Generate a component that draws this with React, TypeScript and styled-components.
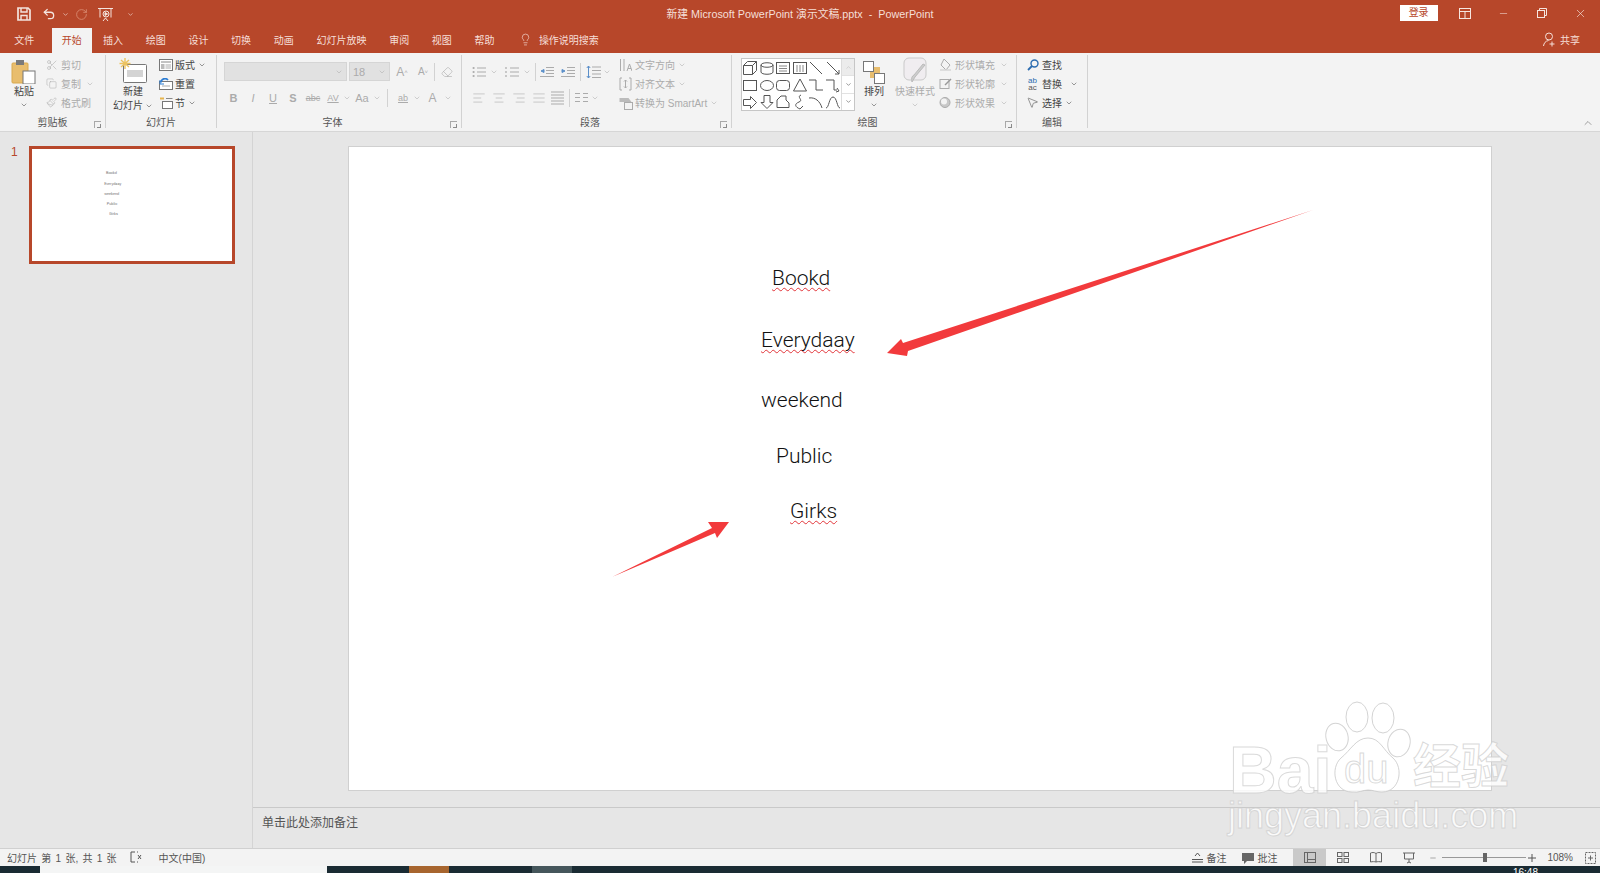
import React from "react";
import styled, { createGlobalStyle } from "styled-components";
import {
  AlignCenter,
  AlignJustify,
  AlignLeft,
  AlignRight,
  ChevronDown,
  ChevronUp,
  Copy,
  Eraser,
  Lightbulb,
  Minus,
  MousePointer2,
  Paintbrush,
  Scissors,
  Undo2,
  RotateCw,
  X,
} from "lucide-react";

const BRAND = "#b7472a";
const MUTED = "#ababab";
const INK = "#444";

const GlobalStyle = createGlobalStyle`
  html, body { margin: 0; padding: 0; height: 100%; overflow: hidden; }
  body { font-family: "Liberation Sans", "Noto Sans CJK SC", sans-serif; font-size: 10px; color: ${INK}; }
`;

const Page = styled.div`
  position: relative;
  display: flex;
  flex-direction: column;
  width: 1600px;
  height: 873px;
  overflow: hidden;
  background: #e6e6e6;
`;

const TitleBar = styled.div`
  display: grid;
  grid-template-columns: 1fr auto 1fr;
  align-items: center;
  height: 28px;
  background: ${BRAND};
  color: #f6e6e0;
`;

const Qat = styled.div`
  display: flex;
  align-items: center;
  padding-left: 17px;
  color: #f4e4de;
`;

const QatSlot = styled.span<{ $w: number; $dim?: boolean }>`
  display: flex;
  align-items: center;
  width: ${(p) => p.$w}px;
  color: ${(p) => (p.$dim ? "#d98b72" : "inherit")};
`;

const DocTitle = styled.div`
  padding-bottom: 3px;
  font-size: 10.8px;
  white-space: pre;
  color: #f5dfd8;
`;

const WindowBtns = styled.div`
  display: flex;
  align-items: center;
  justify-content: flex-end;
  padding-bottom: 2px;
`;

const SignIn = styled.div`
  width: 38px;
  height: 16px;
  line-height: 16px;
  margin-right: 8px;
  text-align: center;
  background: #fff;
  color: ${BRAND};
`;

const WinBtn = styled.div`
  display: flex;
  align-items: center;
  justify-content: center;
  width: 38.6px;
  height: 26px;
  color: #f6e6e0;
`;

const TabBar = styled.div`
  display: flex;
  align-items: stretch;
  height: 25px;
  padding-left: 3px;
  background: ${BRAND};
  color: #f6dfd8;
`;

const Tab = styled.div<{ $active?: boolean; $file?: boolean }>`
  display: flex;
  align-items: center;
  padding: 0 ${(p) => (p.$active ? 10 : 11.35)}px 3px;
  margin-right: ${(p) => (p.$file ? 6 : 0)}px;
  background: ${(p) => (p.$active ? "#f3f3f3" : "transparent")};
  color: ${(p) => (p.$active ? BRAND : "inherit")};
`;

const TellMe = styled.div`
  display: flex;
  align-items: center;
  gap: 7px;
  margin-left: 13px;
  padding-bottom: 3px;
`;

const Share = styled.div`
  display: flex;
  align-items: center;
  gap: 3px;
  margin-left: auto;
  padding: 0 20px 3px 0;
`;

const Ribbon = styled.div`
  position: relative;
  display: flex;
  height: 78px;
  background: #f3f3f3;
  border-bottom: 1px solid #d6d6d6;
`;

const Group = styled.div<{ $w: number }>`
  display: flex;
  flex-direction: column;
  width: ${(p) => p.$w}px;
  margin: 2px 0 3px;
  border-right: 1px solid #d2d2d2;
  box-sizing: border-box;
  position: relative;
`;

const GroupBody = styled.div<{ $col?: boolean; $pad?: number }>`
  flex: 1;
  display: flex;
  flex-direction: ${(p) => (p.$col ? "column" : "row")};
  padding-left: ${(p) => p.$pad ?? 0}px;
  min-height: 0;
`;

const GroupLabel = styled.div<{ $launcher?: boolean }>`
  height: 13px;
  line-height: 16px;
  text-align: center;
  padding-right: ${(p) => (p.$launcher ? 13 : 0)}px;
  color: #555;
`;

const Launcher = styled.span`
  position: absolute;
  right: 4px;
  bottom: 0;
  width: 6px;
  height: 6px;
  border: 1px solid #a8a8a8;
  border-width: 1px 0 0 1px;
  &::after {
    content: "";
    position: absolute;
    right: 0;
    bottom: 0;
    width: 3px;
    height: 3px;
    border: 1px solid #8a8a8a;
    border-width: 0 1px 1px 0;
  }
`;

const LargeBtn = styled.div<{ $w: number; $off?: boolean }>`
  display: flex;
  flex-direction: column;
  align-items: center;
  flex: none;
  width: ${(p) => p.$w}px;
  line-height: 14px;
  white-space: nowrap;
  color: ${(p) => (p.$off ? MUTED : INK)};
`;

const LargeIcon = styled.div`
  display: flex;
  flex: none;
  align-items: flex-end;
  justify-content: center;
  height: 29px;
  margin-bottom: 1px;
`;

const RowStack = styled.div<{ $w?: number; $left?: number }>`
  display: flex;
  flex-direction: column;
  width: ${(p) => (p.$w ? `${p.$w}px` : "auto")};
  margin-left: ${(p) => p.$left ?? 0}px;
`;

const SmallRow = styled.div<{ $off?: boolean }>`
  display: flex;
  align-items: center;
  height: 19px;
  color: ${(p) => (p.$off ? MUTED : INK)};
  white-space: nowrap;
`;

const RowIcon = styled.span<{ $w?: number }>`
  display: flex;
  align-items: center;
  justify-content: center;
  width: ${(p) => p.$w ?? 15}px;
  margin-right: 2px;
`;

const Chev = styled(ChevronDown).attrs({ size: 8, strokeWidth: 1.6 })<{ $left?: number }>`
  margin-left: ${(p) => p.$left ?? 3}px;
  flex: none;
`;

const LargeChev = styled(ChevronDown).attrs({ size: 8, strokeWidth: 1.6 })`
  margin-top: 2px;
  flex: none;
`;

const InlineLabel = styled.span`
  display: inline-flex;
  align-items: center;
  gap: 2px;
`;

const ReplaceGlyph = styled.span`
  display: flex;
  flex-direction: column;
  align-items: center;
  font-family: "Liberation Sans", sans-serif;
  font-size: 8px;
  line-height: 7px;
  color: #2b6cb0;
`;

const ReplaceLow = styled.span`
  color: #555;
`;

const ControlRow = styled.div<{ $top: number }>`
  display: flex;
  align-items: center;
  height: 19px;
  margin-top: ${(p) => p.$top}px;
  color: ${MUTED};
`;

const Combo = styled.div<{ $w: number; $left?: number }>`
  display: flex;
  align-items: center;
  justify-content: flex-end;
  width: ${(p) => p.$w}px;
  height: 19px;
  box-sizing: border-box;
  margin-left: ${(p) => p.$left ?? 0}px;
  padding: 0 3px;
  background: #e1e1e1;
  border: 1px solid #d5d5d5;
  font-size: 11px;
  color: ${MUTED};
`;

const SizeText = styled.span`
  flex: 1;
`;

const Glyph = styled.span<{ $x: number; $size?: number; $weight?: number; $italic?: boolean; $under?: boolean; $strike?: boolean }>`
  display: inline-flex;
  align-items: center;
  justify-content: center;
  position: relative;
  width: ${(p) => p.$x}px;
  font-family: "Liberation Sans", sans-serif;
  font-size: ${(p) => p.$size ?? 11}px;
  font-weight: ${(p) => p.$weight ?? 400};
  font-style: ${(p) => (p.$italic ? "italic" : "normal")};
  text-decoration: ${(p) => (p.$under ? "underline" : p.$strike ? "line-through" : "none")};
`;

const Sup = styled.sup`
  font-size: 6px;
`;

const Sep = styled.span<{ $mx?: number }>`
  width: 1px;
  height: 18px;
  margin: 0 ${(p) => p.$mx ?? 5}px;
  background: #d2d2d2;
  flex: none;
`;

const Gallery = styled.div`
  display: flex;
  flex: none;
  width: 114px;
  height: 53px;
  margin: 3px 0 0 9px;
  box-sizing: border-box;
  background: #fff;
  border: 1px solid #c6c6c6;
`;

const ShapeGrid = styled.div`
  flex: 1;
  display: grid;
  grid-template-columns: repeat(6, 1fr);
  grid-auto-rows: 17px;
  align-items: center;
  justify-items: center;
  color: #555;
`;

const GalleryScroll = styled.div`
  display: flex;
  flex-direction: column;
  width: 12px;
  border-left: 1px solid #dcdcdc;
`;

const ScrollCell = styled.div<{ $off?: boolean }>`
  flex: 1;
  display: flex;
  align-items: center;
  justify-content: center;
  color: ${(p) => (p.$off ? "#c0c0c0" : "#555")};
  background: ${(p) => (p.$off ? "#ececec" : "transparent")};
  & + & {
    border-top: 1px solid #e2e2e2;
  }
`;

const Collapse = styled.span`
  position: absolute;
  right: 6px;
  bottom: 0;
  color: #666;
`;

const Workspace = styled.div`
  flex: 1;
  display: flex;
  min-height: 0;
`;

const ThumbPanel = styled.div`
  display: flex;
  align-items: flex-start;
  width: 253px;
  padding-top: 14px;
  box-sizing: border-box;
  border-right: 1px solid #d4d4d4;
`;

const ThumbNumber = styled.div`
  width: 29px;
  padding-left: 11px;
  box-sizing: border-box;
  font-size: 12px;
  line-height: 12px;
  color: ${BRAND};
`;

const Thumb = styled.div`
  position: relative;
  width: 206px;
  height: 118px;
  box-sizing: border-box;
  background: #fff;
  border: 3px solid ${BRAND};
`;

const ThumbWord = styled.span`
  position: absolute;
  font-family: Roboto, sans-serif;
  font-size: 3.8px;
  color: #777;
  transform: translateY(-50%);
`;

const Editor = styled.div`
  flex: 1;
  display: flex;
  flex-direction: column;
  min-width: 0;
`;

const Canvas = styled.div`
  flex: 1;
  padding: 14px 0 0 95px;
`;

const Slide = styled.div`
  position: relative;
  width: 1144px;
  height: 645px;
  box-sizing: border-box;
  background: #fff;
  border: 1px solid #d0d0d0;
`;

const Word = styled.span<{ $wavy?: boolean }>`
  position: absolute;
  font-family: Roboto, sans-serif;
  font-size: 21px;
  font-weight: 300;
  line-height: 26px;
  color: #111;
  transform: translateY(-50%);
  white-space: nowrap;
  text-decoration: ${(p) => (p.$wavy ? "underline wavy #e2353a 1px" : "none")};
  text-decoration-skip-ink: none;
  text-underline-offset: 2px;
`;

const ArrowLayer = styled.svg`
  position: absolute;
  inset: 0;
  width: 100%;
  height: 100%;
`;

const Notes = styled.div`
  display: flex;
  align-items: center;
  height: 41px;
  padding: 0 0 13px 9px;
  box-sizing: border-box;
  border-top: 1px solid #c9c9c9;
  font-size: 12px;
  color: #555;
`;

const StatusBar = styled.div`
  display: flex;
  align-items: center;
  height: 18px;
  box-sizing: border-box;
  padding-left: 7px;
  background: #f3f3f3;
  border-top: 1px solid #d0d0d0;
  color: #555;
`;

const StatusText = styled.span<{ $left?: number; $spread?: boolean }>`
  display: inline-flex;
  margin-left: ${(p) => p.$left ?? 0}px;
  white-space: pre;
  word-spacing: ${(p) => (p.$spread ? 1.5 : 0)}px;
`;

const StatusRight = styled.div`
  display: flex;
  align-items: center;
  height: 100%;
  margin-left: auto;
`;

const StatusItem = styled.div<{ $right?: number }>`
  display: flex;
  align-items: center;
  gap: 3px;
  margin-right: ${(p) => p.$right ?? 0}px;
`;

const ViewBtn = styled.div<{ $active?: boolean; $w?: number; $left?: number }>`
  display: flex;
  align-items: center;
  justify-content: center;
  width: ${(p) => p.$w ?? 33}px;
  height: 100%;
  margin-left: ${(p) => p.$left ?? 0}px;
  background: ${(p) => (p.$active ? "#c9c9c9" : "transparent")};
  color: #666;
`;

const ZoomMinus = styled.span`
  display: flex;
  margin-left: 4px;
`;

const SliderTrack = styled.div`
  position: relative;
  width: 84px;
  height: 1px;
  margin: 0 2px 0 5px;
  background: #999;
`;

const SliderThumb = styled.span`
  position: absolute;
  left: 41px;
  top: -4px;
  width: 4px;
  height: 9px;
  background: #666;
`;

const Taskbar = styled.div`
  position: relative;
  display: flex;
  height: 7px;
  background: #1a2b33;
  overflow: hidden;
`;

const TaskSlot = styled.span<{ $w: number; $left: number; $bg: string }>`
  width: ${(p) => p.$w}px;
  margin-left: ${(p) => p.$left}px;
  background: ${(p) => p.$bg};
`;

const Clock = styled.span`
  position: absolute;
  right: 62px;
  top: 1px;
  font-size: 10px;
  line-height: 12px;
  color: #fff;
`;

const Watermark = styled.div`
  position: absolute;
  left: 1226px;
  top: 700px;
  width: 300px;
  height: 140px;
  pointer-events: none;
`;

const WmText = styled.span<{ $x: number; $y: number; $size: number; $weight?: number; $tight?: boolean }>`
  position: absolute;
  left: ${(p) => p.$x}px;
  top: ${(p) => p.$y}px;
  font-family: "Liberation Sans", "Noto Sans CJK SC", sans-serif;
  font-size: ${(p) => p.$size}px;
  font-weight: ${(p) => p.$weight ?? 700};
  line-height: ${(p) => (p.$tight ? 0.8 : 1)};
  white-space: nowrap;
  color: rgba(255, 255, 255, 0.82);
  -webkit-text-stroke: 1px rgba(205, 205, 205, 0.75);
`;

const WmPaw = styled.svg`
  position: absolute;
  left: 94px;
  top: 0;
  width: 96px;
  height: 96px;
`;

const Svg = ({ w = 14, h = 14, children }: { w?: number; h?: number; children: React.ReactNode }) => (
  <svg width={w} height={h} viewBox={`0 0 ${w} ${h}`} fill="none" stroke="currentColor" strokeWidth={1}>
    {children}
  </svg>
);

const SaveIcon = () => (
  <Svg w={14} h={14}>
    <path d="M1 1h10l2 2v10H1z" strokeWidth="1.7" />
    <path d="M4 1v4h6V1M4 13V8.5h6V13" strokeWidth="1.4" />
  </Svg>
);

const ShareIcon = () => (
  <Svg w={14} h={15}>
    <circle cx="6" cy="4.5" r="3.5" />
    <path d="M0.5 14c.5-3 2-5 5-5.5M9 9.500v5M6.500 12h5" />
  </Svg>
);

const FindIcon = () => (
  <Svg w={12} h={12}>
    <circle cx="7.5" cy="4.5" r="3.5" stroke="#2b6cb0" strokeWidth="1.4" />
    <path d="M5 7l-4 4" stroke="#2b6cb0" strokeWidth="1.8" />
  </Svg>
);

const PasteIcon = () => (
  <Svg w={26} h={26}>
    <rect x="1" y="5" width="16" height="20" rx="1" fill="#e8bd6d" stroke="#d9a94f" />
    <rect x="5" y="2" width="8" height="5" fill="#7a7a7a" stroke="none" />
    <rect x="12" y="13" width="12" height="13" fill="#fff" stroke="#777" />
  </Svg>
);

const NewSlideIcon = () => (
  <Svg w={28} h={26}>
    <rect x="4.5" y="6.5" width="23" height="18" rx="1" fill="#fff" stroke="#777" />
    <rect x="8" y="12" width="16" height="7" fill="#d4d4d4" stroke="none" />
    <path d="M6 0v11M0.5 5.5h11M2 2l8 7M10 2l-8 7" stroke="#ecc35f" strokeWidth="1.4" />
  </Svg>
);

const LayoutIcon = () => (
  <Svg w={14} h={12}>
    <rect x="0.5" y="0.5" width="13" height="11" fill="#fff" stroke="#777" />
    <path d="M2 3h10" stroke="#888" />
    <rect x="2" y="5" width="3.5" height="5" fill="#bbb" stroke="none" />
    <rect x="6.5" y="5" width="5.5" height="5" fill="#d6d6d6" stroke="none" />
  </Svg>
);

const ResetIcon = () => (
  <Svg w={14} h={12}>
    <rect x="0.5" y="3.5" width="13" height="8" fill="#fff" stroke="#777" />
    <path d="M2 4.5a4 4 0 0 1 7-2.500" stroke="#2b7cd3" strokeWidth="1.6" />
    <path d="M1 2v4h4" stroke="#2b7cd3" />
    <path d="M3 8h8" stroke="#aaa" />
  </Svg>
);

const SectionIcon = () => (
  <Svg w={14} h={13}>
    <path d="M1 2.5h4" stroke="#e6b44c" strokeWidth="2" />
    <path d="M7 2.5h6.5" stroke="#888" />
    <rect x="3.5" y="5.5" width="10" height="7" fill="#fff" stroke="#777" />
  </Svg>
);

const ArrangeIcon = () => (
  <Svg w={22} h={23}>
    <rect x="7" y="6" width="10" height="11" fill="#e8bd6d" stroke="none" />
    <rect x="0.5" y="0.5" width="10" height="10" fill="#fff" stroke="#777" />
    <rect x="11.5" y="12.5" width="10" height="10" fill="#fff" stroke="#777" />
  </Svg>
);

const QuickStyleIcon = () => (
  <Svg w={25} h={27}>
    <rect x="1" y="1" width="22" height="22" rx="5" fill="#f0edf0" stroke="#c9c9c9" />
    <path d="M22 8L12 20l-3 5c-1-4 0-6 2-7l9-11z" fill="#cdcdcd" stroke="#bbb" />
  </Svg>
);

const ShapeFillIcon = () => (
  <Svg w={13} h={13}>
    <path d="M5 1l6 6-4 5-5-5z" stroke={MUTED} />
    <path d="M1 12h11" stroke="#d6d6d6" strokeWidth="1.5" />
  </Svg>
);

const ShapeLineIcon = () => (
  <Svg w={13} h={13}>
    <rect x="1" y="2.5" width="9" height="9" stroke={MUTED} />
    <path d="M6 8l6-6" stroke="#999" strokeWidth="1.4" />
  </Svg>
);

const ShapeFxIcon = () => (
  <Svg w={13} h={13}>
    <circle cx="6" cy="6.5" r="5" fill="#c8c8c8" stroke="#aaa" />
    <circle cx="5" cy="5.5" r="3" fill="#f3f3f3" stroke="none" />
  </Svg>
);

const ListIcon = ({ numbered }: { numbered?: boolean }) => (
  <Svg w={14} h={12}>
    {[2, 6, 10].map((y) => (
      <g key={y}>
        <path d={`M5 ${y}h9`} />
        {numbered ? <path d={`M1 ${y - 1}v2`} strokeWidth="1.2" /> : <circle cx="1.6" cy={y} r="1.1" fill="currentColor" stroke="none" />}
      </g>
    ))}
  </Svg>
);

const IndentIcon = ({ more }: { more?: boolean }) => (
  <Svg w={14} h={12}>
    <path d="M6 1.5h8M6 4.5h8M6 7.5h8M0 10.5h14" />
    <path d={more ? "M1 3.5l3 1.5-3 1.5z" : "M4 3.5L1 5l3 1.5z"} fill="#5b8fc9" stroke="#5b8fc9" />
  </Svg>
);

const LineSpacingIcon = () => (
  <Svg w={15} h={14}>
    <path d="M6 2h9M6 5.5h9M6 9h9M6 12.5h9" />
    <path d="M2.5 1v12M0.8 3L2.5 1l1.7 2M0.8 11l1.7 2 1.7-2" stroke="#5b8fc9" />
  </Svg>
);

const TextDirIcon = () => (
  <Svg w={13} h={14}>
    <path d="M1.5 1v12M5 1v12M8 13l2.5-7 2.5 7M9 10.5h3" />
  </Svg>
);

const AlignTextIcon = () => (
  <Svg w={13} h={14}>
    <path d="M3 1H1v12h2M10 1h2v12h-2M6.5 3v8M5 4.5L6.5 3 8 4.5M5 9.5L6.5 11 8 9.5" />
  </Svg>
);

const SmartArtIcon = () => (
  <Svg w={14} h={14}>
    <path d="M0.5 2h9l3 4h-12z" fill="#bbb" stroke="none" />
    <rect x="5.5" y="6.5" width="8" height="7" fill="#f3f3f3" stroke={MUTED} />
  </Svg>
);

const DistributeIcon = () => (
  <Svg w={13} h={14}>
    <path d="M0 1h13M0 13h13M0 4h13M0 7h13M0 10h13" strokeWidth="1.2" />
  </Svg>
);

const ColumnsIcon = () => (
  <Svg w={13} h={11}>
    <path d="M0 1.5h5M0 5.5h5M0 9.5h5M8 1.5h5M8 5.5h5M8 9.5h5" />
  </Svg>
);

const ShapeIcons = [
  <path key="cube" d="M1.5 5.5h9v9h-9zM1.5 5.5l4-4h9v9l-4 4M10.5 5.5l4-4" />,
  <path key="can" d="M2 5v7c0 3 12 3 12 0V5c0-3-12-3-12 0c0 3 12 3 12 0" />,
  <g key="textbox"><rect x="1.5" y="2.5" width="13" height="11" /><path d="M4 6h8M4 8.5h8M4 11h8" stroke="#888" /></g>,
  <g key="vtext"><rect x="1.5" y="2.5" width="13" height="11" /><path d="M5 5v7M8 5v7M11 5v7" stroke="#888" /></g>,
  <path key="line" d="M2 2l12 12" />,
  <path key="arrowline" d="M2 2l12 12M14 10v4h-4" />,
  <rect key="rect" x="1.5" y="3.5" width="13" height="10" />,
  <ellipse key="ellipse" cx="8" cy="8.5" rx="6.5" ry="5" />,
  <rect key="round" x="1.5" y="3.5" width="13" height="10" rx="3" />,
  <path key="tri" d="M8 2l6.5 12h-13z" />,
  <path key="elbow" d="M1 3h7v10h7" />,
  <path key="elbowar" d="M1 3h8v10h3M12 11l2 3-3 1" />,
  <path key="rightar" d="M1.5 5.5h7V2.5l6 6-6 6v-3h-7z" />,
  <path key="downar" d="M5 1.5h6v7h3l-6 6-6-6h3z" />,
  <path key="penta" d="M2 13.5V6l4-4h5v4l3 3v4.5z" />,
  <path key="squig" d="M9 1C4 3 12 6 7 8S3 13 8 15M11 12l-3 3" />,
  <path key="arc" d="M1 4c6-1 11 3 13 10" />,
  <path key="curve" d="M1 14C4 14 4 3 8 3s4 11 7 11" />,
];

const Arrows = () => (
  <ArrowLayer viewBox="0 0 1142 643">
    <polygon fill="#f23a3c" points="964,63 554,196 552,192 538,206 558,209 559,204" />
    <polygon fill="#f23a3c" points="263,430 363,381 359,375 380,375 368,391 366,386" />
  </ArrowLayer>
);

const WORDS: { text: string; x: number; y: number; wavy?: boolean }[] = [
  { text: "Bookd", x: 423, y: 131, wavy: true },
  { text: "Everydaay", x: 412, y: 193, wavy: true },
  { text: "weekend", x: 412, y: 253 },
  { text: "Public", x: 427, y: 309 },
  { text: "Girks", x: 441, y: 364, wavy: true },
];

const TABS = ["插入", "绘图", "设计", "切换", "动画", "幻灯片放映", "审阅", "视图", "帮助"];
const SCALE = 200 / 1142;

export default function App() {
  return (
    <Page>
      <GlobalStyle />
      <TitleBar>
        <Qat>
          <QatSlot $w={25}><SaveIcon /></QatSlot>
          <QatSlot $w={20}><Undo2 size={14} strokeWidth={2.2} /></QatSlot>
          <QatSlot $w={13}><ChevronDown size={7} strokeWidth={2} /></QatSlot>
          <QatSlot $w={23} $dim><RotateCw size={13} strokeWidth={1.6} /></QatSlot>
          <QatSlot $w={29}>
            <Svg w={15} h={15}>
              <path d="M0 1.5h15M2 1.5v9M13 1.5v9M5 14l2.5-3 2.5 3" />
              <circle cx="8" cy="7" r="3" />
              <path d="M7 5.5l2.5 1.5L7 8.5z" fill="currentColor" />
            </Svg>
          </QatSlot>
          <QatSlot $w={10}><ChevronDown size={7} strokeWidth={2} /></QatSlot>
        </Qat>
        <DocTitle>新建 Microsoft PowerPoint 演示文稿.pptx  -  PowerPoint</DocTitle>
        <WindowBtns>
          <SignIn>登录</SignIn>
          <WinBtn>
            <Svg w={12} h={11}>
              <rect x="0.5" y="0.5" width="11" height="10" />
              <path d="M0.5 3.5h11M6 3.5v7" />
            </Svg>
          </WinBtn>
          <WinBtn><Minus size={11} strokeWidth={1.2} /></WinBtn>
          <WinBtn>
            <Svg w={10} h={10}>
              <rect x="0.5" y="2.5" width="7" height="7" />
              <path d="M2.5 2.5v-2h7v7h-2" />
            </Svg>
          </WinBtn>
          <WinBtn><X size={13} strokeWidth={1.2} /></WinBtn>
        </WindowBtns>
      </TitleBar>

      <TabBar>
        <Tab $file>文件</Tab>
        <Tab $active>开始</Tab>
        {TABS.map((t) => (
          <Tab key={t}>{t}</Tab>
        ))}
        <TellMe>
          <Lightbulb size={13} strokeWidth={1.2} />
          操作说明搜索
        </TellMe>
        <Share>
          <ShareIcon />
          共享
        </Share>
      </TabBar>

      <Ribbon>
        <Group $w={106}>
          <GroupBody $pad={9}>
            <LargeBtn $w={30}>
              <LargeIcon><PasteIcon /></LargeIcon>
              粘贴
              <LargeChev />
            </LargeBtn>
            <RowStack $left={5}>
              <SmallRow $off><RowIcon><Scissors size={12} strokeWidth={1.1} /></RowIcon>剪切</SmallRow>
              <SmallRow $off><RowIcon><Copy size={11} strokeWidth={1.1} /></RowIcon>复制<Chev $left={5} /></SmallRow>
              <SmallRow $off><RowIcon><Paintbrush size={11} strokeWidth={1.1} /></RowIcon>格式刷</SmallRow>
            </RowStack>
          </GroupBody>
          <GroupLabel>剪贴板</GroupLabel>
          <Launcher />
        </Group>

        <Group $w={111}>
          <GroupBody $pad={6}>
            <LargeBtn $w={42}>
              <LargeIcon><NewSlideIcon /></LargeIcon>
              新建
              <InlineLabel>幻灯片<Chev $left={0} /></InlineLabel>
            </LargeBtn>
            <RowStack $left={4}>
              <SmallRow><RowIcon><LayoutIcon /></RowIcon>版式<Chev /></SmallRow>
              <SmallRow><RowIcon><ResetIcon /></RowIcon>重置</SmallRow>
              <SmallRow><RowIcon><SectionIcon /></RowIcon>节<Chev /></SmallRow>
            </RowStack>
          </GroupBody>
          <GroupLabel>幻灯片</GroupLabel>
        </Group>

        <Group $w={245}>
          <GroupBody $col $pad={7}>
            <ControlRow $top={7}>
              <Combo $w={123}><Chev $left={0} /></Combo>
              <Combo $w={41} $left={2}><SizeText>18</SizeText><Chev $left={0} /></Combo>
              <Glyph $x={24} $size={12}>A<Sup>˄</Sup></Glyph>
              <Glyph $x={18} $size={10}>A<Sup>˅</Sup></Glyph>
              <Sep $mx={2} />
              <Glyph $x={20}><Eraser size={12} strokeWidth={1.2} /></Glyph>
            </ControlRow>
            <ControlRow $top={7}>
              <Glyph $x={19} $weight={700}>B</Glyph>
              <Glyph $x={20} $italic>I</Glyph>
              <Glyph $x={20} $under>U</Glyph>
              <Glyph $x={20} $weight={700}>S</Glyph>
              <Glyph $x={20} $size={9} $strike>abc</Glyph>
              <Glyph $x={20} $size={9} $under>AV</Glyph>
              <Chev $left={0} />
              <Glyph $x={22}>Aa</Glyph>
              <Chev $left={0} />
              <Sep $mx={6} />
              <Glyph $x={18} $size={9} $under>ab</Glyph>
              <Chev $left={1} />
              <Glyph $x={23} $size={12}>A</Glyph>
              <Chev $left={0} />
            </ControlRow>
          </GroupBody>
          <GroupLabel $launcher>字体</GroupLabel>
          <Launcher />
        </Group>

        <Group $w={270}>
          <GroupBody $pad={10}>
            <RowStack $w={146}>
              <ControlRow $top={7}>
                <ListIcon /><Chev $left={4} />
                <Glyph $x={7} />
                <ListIcon numbered /><Chev $left={4} />
                <Sep $mx={4} />
                <IndentIcon /><Glyph $x={7} /><IndentIcon more />
                <Sep $mx={5} />
                <LineSpacingIcon /><Chev $left={2} />
              </ControlRow>
              <ControlRow $top={7}>
                <AlignLeft size={14} strokeWidth={1} />
                <Glyph $x={6} />
                <AlignCenter size={14} strokeWidth={1} />
                <Glyph $x={6} />
                <AlignRight size={14} strokeWidth={1} />
                <Glyph $x={6} />
                <AlignJustify size={14} strokeWidth={1} />
                <Glyph $x={5} />
                <DistributeIcon />
                <Sep $mx={5} />
                <ColumnsIcon /><Chev $left={3} />
              </ControlRow>
            </RowStack>
            <RowStack>
              <SmallRow $off><RowIcon><TextDirIcon /></RowIcon>文字方向<Chev /></SmallRow>
              <SmallRow $off><RowIcon><AlignTextIcon /></RowIcon>对齐文本<Chev /></SmallRow>
              <SmallRow $off><RowIcon><SmartArtIcon /></RowIcon>转换为 SmartArt<Chev /></SmallRow>
            </RowStack>
          </GroupBody>
          <GroupLabel $launcher>段落</GroupLabel>
          <Launcher />
        </Group>

        <Group $w={285}>
          <GroupBody>
            <Gallery>
              <ShapeGrid>
                {ShapeIcons.map((s) => (
                  <Svg key={s.key} w={16} h={16}>{s}</Svg>
                ))}
              </ShapeGrid>
              <GalleryScroll>
                <ScrollCell $off><ChevronUp size={7} strokeWidth={2} /></ScrollCell>
                <ScrollCell><ChevronDown size={7} strokeWidth={2} /></ScrollCell>
                <ScrollCell><ChevronDown size={7} strokeWidth={2} /></ScrollCell>
              </GalleryScroll>
            </Gallery>
            <LargeBtn $w={38}>
              <LargeIcon><ArrangeIcon /></LargeIcon>
              排列
              <LargeChev />
            </LargeBtn>
            <LargeBtn $w={44} $off>
              <LargeIcon><QuickStyleIcon /></LargeIcon>
              快速样式
              <LargeChev />
            </LargeBtn>
            <RowStack $left={1}>
              <SmallRow $off><RowIcon><ShapeFillIcon /></RowIcon>形状填充<Chev $left={5} /></SmallRow>
              <SmallRow $off><RowIcon><ShapeLineIcon /></RowIcon>形状轮廓<Chev $left={5} /></SmallRow>
              <SmallRow $off><RowIcon><ShapeFxIcon /></RowIcon>形状效果<Chev $left={5} /></SmallRow>
            </RowStack>
          </GroupBody>
          <GroupLabel $launcher>绘图</GroupLabel>
          <Launcher />
        </Group>

        <Group $w={71}>
          <GroupBody $pad={8}>
            <RowStack>
              <SmallRow><RowIcon><FindIcon /></RowIcon>查找</SmallRow>
              <SmallRow>
                <RowIcon>
                  <ReplaceGlyph>ab<ReplaceLow>ac</ReplaceLow></ReplaceGlyph>
                </RowIcon>
                替换<Chev $left={8} />
              </SmallRow>
              <SmallRow><RowIcon><MousePointer2 size={13} strokeWidth={1} /></RowIcon>选择<Chev /></SmallRow>
            </RowStack>
          </GroupBody>
          <GroupLabel>编辑</GroupLabel>
        </Group>

        <Collapse><ChevronUp size={12} strokeWidth={1.2} /></Collapse>
      </Ribbon>

      <Workspace>
        <ThumbPanel>
          <ThumbNumber>1</ThumbNumber>
          <Thumb>
            {WORDS.map((w) => (
              <ThumbWord key={w.text} style={{ left: w.x * SCALE, top: w.y * SCALE }}>
                {w.text}
              </ThumbWord>
            ))}
          </Thumb>
        </ThumbPanel>
        <Editor>
          <Canvas>
            <Slide>
              {WORDS.map((w) => (
                <Word key={w.text} $wavy={w.wavy} style={{ left: w.x, top: w.y }}>
                  {w.text}
                </Word>
              ))}
              <Arrows />
            </Slide>
          </Canvas>
          <Notes>单击此处添加备注</Notes>
        </Editor>
      </Workspace>

      <StatusBar>
        <StatusText $spread>幻灯片 第 1 张, 共 1 张</StatusText>
        <StatusText $left={13}>
          <Svg w={12} h={13}>
            <path d="M5 1H1v10h4M7 1h1M7 11h1M8 4l3 4M11 4l-3 4" />
          </Svg>
        </StatusText>
        <StatusText $left={17}>中文(中国)</StatusText>
        <StatusRight>
          <StatusItem $right={16}>
            <Svg w={11} h={11}>
              <path d="M0 7.5h11M0 10h11M3 4l2.5-3L8 4" />
            </Svg>
            备注
          </StatusItem>
          <StatusItem $right={16}>
            <Svg w={12} h={12}>
              <path d="M0 1h12v8H5l-3 3V9H0z" fill="#666" stroke="none" />
            </Svg>
            批注
          </StatusItem>
          <ViewBtn $active>
            <Svg w={12} h={11}>
              <rect x="0.5" y="0.5" width="11" height="10" />
              <path d="M3.5 0.5v10M3.5 7.5h8" />
            </Svg>
          </ViewBtn>
          <ViewBtn>
            <Svg w={12} h={11}>
              <rect x="0.5" y="0.5" width="4.5" height="4" />
              <rect x="7" y="0.5" width="4.5" height="4" />
              <rect x="0.5" y="6.5" width="4.5" height="4" />
              <rect x="7" y="6.5" width="4.5" height="4" />
            </Svg>
          </ViewBtn>
          <ViewBtn>
            <Svg w={12} h={11}>
              <path d="M6 1.5C4 0 2 0.5 0.5 1v9c2-.5 4-.5 5.5 0 1.5-.5 3.5-.5 5.5 0V1C10 .5 8 0 6 1.5zM6 1.5V10" />
            </Svg>
          </ViewBtn>
          <ViewBtn>
            <Svg w={12} h={12}>
              <path d="M0 1h12M1.5 1v6h9V1M6 7v3M4 11l2-1 2 1" />
            </Svg>
          </ViewBtn>
          <ZoomMinus><Minus size={8} strokeWidth={1.4} /></ZoomMinus>
          <SliderTrack><SliderThumb /></SliderTrack>
          <Svg w={8} h={8}><path d="M4 0v8M0 4h8" /></Svg>
          <StatusText $left={11}>108%</StatusText>
          <ViewBtn $w={20} $left={7}>
            <Svg w={11} h={12}>
              <rect x="0.5" y="0.5" width="10" height="11" strokeDasharray="2 1" />
              <path d="M3 6h5M5.5 3.5v5" />
            </Svg>
          </ViewBtn>
        </StatusRight>
      </StatusBar>

      <Taskbar>
        <TaskSlot $left={40} $w={287} $bg="#f4f5f5" />
        <TaskSlot $left={82} $w={40} $bg="#a7652e" />
        <TaskSlot $left={83} $w={40} $bg="#45565b" />
        <Clock>16:48</Clock>
      </Taskbar>

      <Watermark>
        <WmPaw viewBox="0 0 96 96">
          <g fill="rgba(255,255,255,.82)" stroke="rgba(200,200,200,.8)" strokeWidth="1">
            <ellipse cx="17" cy="37" rx="11" ry="14" transform="rotate(-15 17 37)" />
            <ellipse cx="37" cy="17" rx="11" ry="15" />
            <ellipse cx="63" cy="18" rx="11" ry="15" />
            <ellipse cx="79" cy="43" rx="11" ry="14" transform="rotate(15 79 43)" />
            <path d="M48 38c12 0 15 12 25 20 11 10 7 34-11 34-6 0-9-2-14-2s-9 3-16 2C14 92 10 68 21 58c10-8 15-20 27-20z" />
          </g>
        </WmPaw>
        <WmText $x={3} $y={44} $size={66} $tight>Bai</WmText>
        <WmText $x={118} $y={49} $size={40} $weight={400}>du</WmText>
        <WmText $x={187} $y={43} $size={48}>经验</WmText>
        <WmText $x={2} $y={98} $size={36} $weight={400}>jingyan.baidu.com</WmText>
      </Watermark>
    </Page>
  );
}
